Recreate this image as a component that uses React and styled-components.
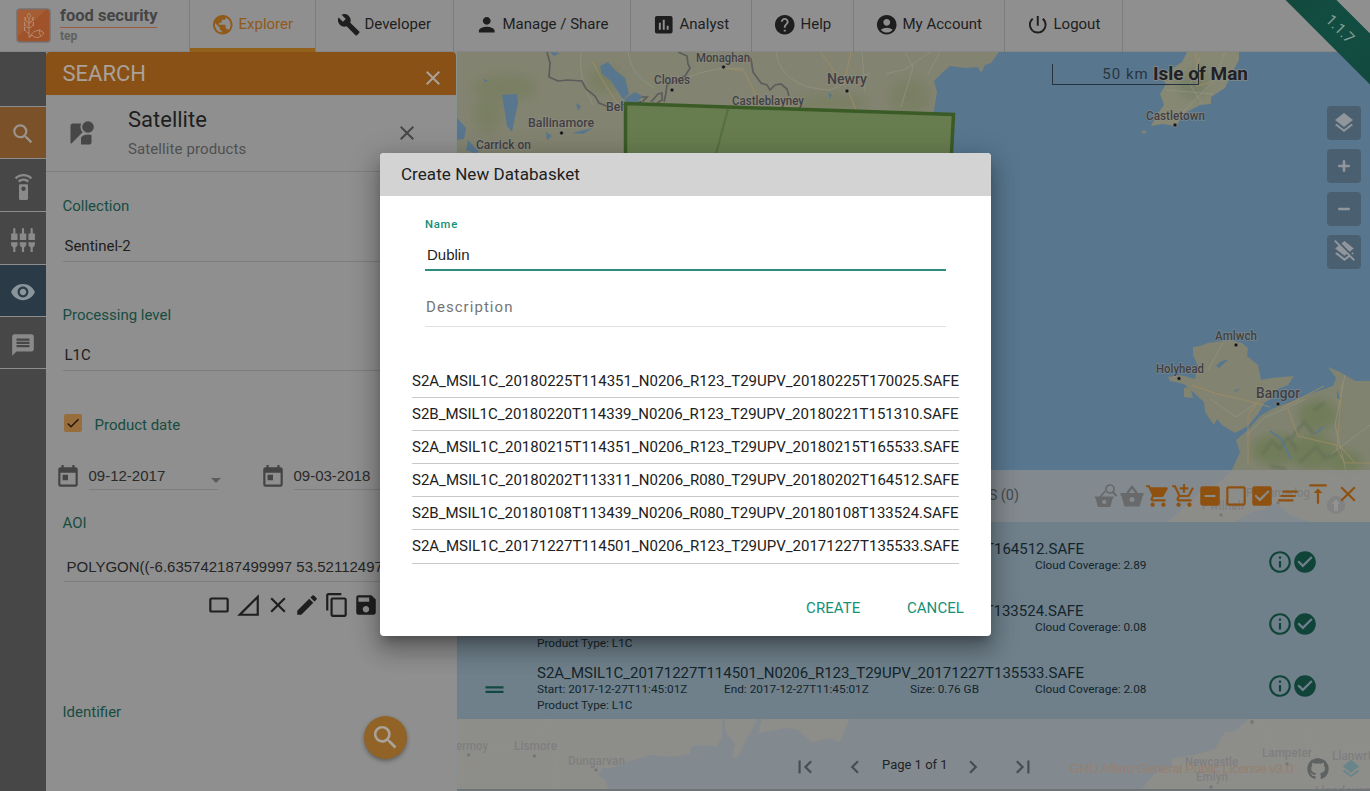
import React from 'react';
import styled, { createGlobalStyle, css } from 'styled-components';
import {
  MdPublic, MdBuild, MdPerson, MdInsertChart, MdHelp, MdAccountCircle, MdPowerSettingsNew,
  MdSearch, MdSettingsRemote, MdSettingsInputComponent, MdVisibility, MdMessage, MdStreetview,
  MdClose, MdToday, MdArrowDropDown, MdCropLandscape, MdSignalCellularNull, MdModeEdit,
  MdContentCopy, MdSave, MdLayers, MdLayersClear, MdShoppingCart,
  MdAddShoppingCart, MdIndeterminateCheckBox, MdCheckBoxOutlineBlank, MdCheckBox, MdClearAll,
  MdVerticalAlignTop, MdInfoOutline, MdCheckCircle, MdDragHandle, MdFirstPage, MdChevronLeft,
  MdChevronRight, MdLastPage, MdCheck,
} from 'react-icons/md';
import { FaGithub } from 'react-icons/fa';

const c = {
  surface: '#8f8f8f',
  ink: '#1e1e1e',
  muted: '#505050',
  green: '#174c41',
  orange: '#8f5a1a',
  line: '#7d7d7d',
  rail: '#474747',
  accent: '#149077',
};

const Global = createGlobalStyle`
  *, *::before, *::after { box-sizing: border-box; }
  body { margin: 0; overflow: hidden; }
  svg { display: block; flex: none; }
`;

const Page = styled.div`
  position: relative;
  display: grid;
  grid-template-rows: 52px 739px;
  width: 1370px;
  height: 791px;
  overflow: hidden;
  background: ${c.surface};
  color: ${c.ink};
  font: 15px/20px Roboto, "Liberation Sans", sans-serif;
`;

/* ---------- top bar ---------- */
const Header = styled.header`
  position: relative;
  display: flex;
  border-bottom: 1px solid #868686;
`;
const Brand = styled.div`
  display: flex;
  width: 189px;
  padding: 8px 0 0 16px;
  gap: 9px;
`;
const BrandText = styled.div`
  display: flex;
  flex-direction: column;
  width: 97px;
  color: #454545;
`;
const BrandName = styled.div`
  height: 20px;
  border-bottom: 1px solid #9c5a3c;
  font-size: 16.5px;
  font-weight: 700;
  line-height: 16px;
  white-space: nowrap;
`;
const BrandSub = styled.div`
  color: #606060;
  font-size: 12px;
  font-weight: 700;
  line-height: 16px;
`;
const Nav = styled.nav`
  display: flex;
  border-left: 1px solid #7c7c7c;
`;
const NavItem = styled.a`
  display: flex;
  align-items: center;
  gap: 4px;
  width: ${(p) => p.$w}px;
  height: 52px;
  padding: 0 0 4px 21px;
  border-right: 1px solid #7c7c7c;
  white-space: nowrap;
  svg { margin-top: 2px; }
  ${(p) => p.$active && css`
    color: ${c.orange};
    box-shadow: inset 0 -4px #91611b;
  `}
`;
const RibbonCorner = styled.div`
  position: absolute;
  z-index: 3;
  top: 0;
  right: 0;
  width: 90px;
  height: 90px;
  overflow: hidden;
`;
const Ribbon = styled.div`
  position: absolute;
  top: 11px;
  left: -40px;
  width: 200px;
  height: 36px;
  background: linear-gradient(90deg, #13463b, #124d41 50%, #13463b);
  color: #849d96;
  line-height: 36px;
  text-align: center;
  transform: rotate(45deg);
`;

/* ---------- left rail and search panel ---------- */
const Body = styled.div`
  display: flex;
  min-height: 0;
`;
const Rail = styled.aside`
  display: flex;
  flex-direction: column;
  width: 46px;
  padding-top: 53.5px;
  background: ${c.rail};
`;
const RailButton = styled.div`
  display: flex;
  align-items: center;
  justify-content: center;
  height: 52.7px;
  padding-top: 4px;
  border-top: 1px solid #8d8d8d;
  background: ${(p) => p.$bg || 'transparent'};
  color: ${(p) => p.$fg || '#8a8a8a'};
  &:last-child { border-bottom: 1px solid #8d8d8d; }
`;
const SearchPanel = styled.section`
  display: flex;
  flex-direction: column;
  width: 411px;
  border-right: 1px solid #8a8f91;
  background: ${c.surface};
`;
const PanelTitle = styled.div`
  display: flex;
  justify-content: space-between;
  height: 43px;
  padding: 0 11px 0 16.5px;
  border-radius: 4px 4px 0 0;
  background: #8a5116;
  color: #a9a19a;
  font-size: 22px;
  line-height: 43px;
  svg { margin-top: 14px; }
`;
const Source = styled.div`
  display: flex;
  height: 77px;
  padding: 0 37px 0 21px;
  border-bottom: 1px solid #7e7e7e;
  color: #474747;
`;
const SourceIcon = styled.div`
  width: 61px;
  padding-top: 25px;
`;
const SourceText = styled.div`
  flex: 1;
  padding-top: 12px;
`;
const SourceName = styled.div`
  color: ${c.ink};
  font-size: 22px;
  line-height: 26px;
`;
const SourceNote = styled.div`
  margin-top: 5.5px;
  color: ${c.muted};
  letter-spacing: 0.1px;
`;
const SourceClose = styled.div`
  padding-top: 26px;
`;
const Form = styled.div`
  display: flex;
  flex-direction: column;
  padding: 23.5px 0 0 16.5px;
`;
const Label = styled.label`
  height: 20px;
  color: ${c.green};
`;
const Select = styled.div`
  height: 36px;
  margin: 10px 30px 43.5px 0;
  padding: 10px 0 0 2px;
  border-bottom: 1px solid ${c.line};
`;
const CheckRow = styled.div`
  display: flex;
  align-items: center;
  gap: 13px;
  height: 20px;
  padding-left: 1.5px;
  margin: 0.5px 0 29px;
`;
const Tick = styled.span`
  display: flex;
  align-items: center;
  justify-content: center;
  width: 17.5px;
  height: 17.5px;
  margin-top: -4px;
  border-radius: 2px;
  background: #976e3b;
  color: #24140c;
`;
const Dates = styled.div`
  display: flex;
  gap: 36px;
  height: 28px;
  margin-left: -8px;
`;
const DateField = styled.div`
  display: flex;
  width: 169px;
  color: #444;
`;
const DateValue = styled.div`
  display: flex;
  flex: 1;
  justify-content: space-between;
  height: 26px;
  margin: 0 6px 0 8px;
  padding-top: 1.5px;
  border-bottom: 1px solid ${c.line};
  color: #2a2a2a;
  font-family: "Liberation Sans", sans-serif;
  svg { margin: 2px -10px 0 0; color: #5c5c5c; }
`;
const AreaLabel = styled(Label)`
  margin-top: 21px;
`;
const AreaInput = styled.div`
  height: 28px;
  margin: 20.5px 30px 10px 1.5px;
  padding: 3px 0 0 2.5px;
  border-bottom: 1px solid ${c.line};
  color: #252525;
  font-family: "Liberation Sans", sans-serif;
  white-space: nowrap;
  overflow: hidden;
`;
const AreaTools = styled.div`
  display: flex;
  gap: 3.5px;
  height: 26px;
  margin: 0 0 84px 143px;
`;
const Fab = styled.button`
  display: flex;
  align-items: center;
  justify-content: center;
  align-self: flex-end;
  width: 43px;
  height: 43px;
  margin: -6px 49px 0 0;
  padding: 0;
  border: 0;
  border-radius: 50%;
  background: #916326;
  color: #a9a39c;
  box-shadow: 0 2px 4px rgba(0, 0, 0, 0.35);
`;

/* ---------- map ---------- */
const MapArea = styled.main`
  position: relative;
  flex: 1;
  overflow: hidden;
  background: #58778f;
`;
const MapCanvas = styled.svg`
  position: absolute;
  inset: 0;
`;
const ScaleBar = styled.div`
  position: absolute;
  top: 12px;
  left: 595px;
  width: 147px;
  height: 21px;
  border: 1px solid #26333c;
  border-top: 0;
  color: #29353d;
  letter-spacing: 1px;
  text-align: center;
`;
const Controls = styled.div`
  position: absolute;
  top: 53.5px;
  right: 9px;
  display: flex;
  flex-direction: column;
  gap: 9px;
`;
const Control = styled.button`
  display: flex;
  align-items: center;
  justify-content: center;
  width: 34px;
  height: 34px;
  padding: 0;
  border: 0;
  border-radius: 4px;
  background: #4a5f70;
  color: #90969b;
`;
const Credit = styled.div`
  position: absolute;
  z-index: 2;
  right: 8px;
  bottom: 9px;
  display: flex;
  align-items: center;
  color: #96806f;
  font: 13.5px/26px "Liberation Sans", sans-serif;
  letter-spacing: -0.45px;
  white-space: nowrap;
  svg:first-of-type { margin: 0 11px 0 14px; }
`;

/* ---------- results ---------- */
const Results = styled.section`
  position: absolute;
  left: 0;
  right: 0;
  bottom: 0;
  display: flex;
  flex-direction: column;
  height: 321.5px;
`;
const ResultsBar = styled.div`
  display: flex;
  align-items: center;
  justify-content: space-between;
  height: 52.5px;
  padding: 0 8px 0 0;
  background: rgba(143, 143, 143, 0.78);
`;
const Basket = styled.div`
  width: 562px;
  padding-top: 1px;
  color: #444a4f;
  font-size: 14.5px;
  text-align: right;
`;
const BarTools = styled.div`
  display: flex;
  align-items: center;
  color: #8f5110;
`;
const BarTool = styled.span`
  display: flex;
  justify-content: center;
  width: ${(p) => p.$w || 26}px;
  margin-top: ${(p) => p.$up || 0}px;
  color: ${(p) => (p.$off ? '#68696a' : 'inherit')};
`;
const Rows = styled.div`
  display: flex;
  flex-direction: column;
  justify-content: flex-end;
  height: 196.5px;
  background: #6f808b;
`;
const Row = styled.div`
  display: flex;
  align-items: center;
  height: 62.2px;
  border-bottom: 1px solid #727e87;
  color: #14252c;
`;
const Handle = styled.div`
  width: 80px;
  padding: 5px 0 0 23.5px;
  color: #124940;
`;
const RowText = styled.div`
  flex: 1;
  padding-top: 5px;
`;
const RowName = styled.div`
  line-height: 16px;
`;
const Facts = styled.div`
  display: grid;
  grid-template-columns: 187px 186px 125px 1fr;
  font-size: 11.8px;
  line-height: 16px;
`;
const RowActions = styled.div`
  display: flex;
  width: 103px;
  margin-top: -2px;
  color: #114439;
  svg { margin-right: -1px; }
`;
const Pager = styled.div`
  display: flex;
  flex: 1;
  align-items: center;
  padding: 26px 0 0 335px;
  border-bottom: 2px solid #6f7577;
  background: rgba(143, 143, 143, 0.78);
  color: #474e52;
`;
const PageText = styled.div`
  margin: -3px 14px 0 14px;
  width: 64px;
  color: #1e2426;
  font-size: 13px;
  white-space: nowrap;
`;
const Gap = styled.span`
  width: 24px;
`;

/* ---------- dialog ---------- */
const Overlay = styled.div`
  position: absolute;
  inset: 0;
  z-index: 4;
  display: flex;
  align-items: flex-start;
  justify-content: center;
  padding-top: 153px;
`;
const Dialog = styled.div`
  display: flex;
  flex-direction: column;
  width: 611px;
  height: 482.5px;
  margin-left: 1px;
  border-radius: 4px;
  overflow: hidden;
  background: #fff;
  box-shadow: 0 7px 9px -4px rgba(0, 0, 0, 0.25), 0 14px 22px 2px rgba(0, 0, 0, 0.2),
    0 6px 28px 5px rgba(0, 0, 0, 0.16);
`;
const DialogTitle = styled.h2`
  margin: 0;
  height: 43px;
  padding-left: 21px;
  background: #d3d3d3;
  color: #212121;
  font-size: 17px;
  font-weight: 400;
  letter-spacing: 0.06px;
  line-height: 42px;
`;
const Fields = styled.div`
  display: flex;
  flex-direction: column;
  padding: 21px 45px 0;
`;
const FieldLabel = styled.label`
  color: ${c.accent};
  font-size: 11.3px;
  font-weight: 500;
  letter-spacing: 0.75px;
  line-height: 16px;
`;
const FieldInput = styled.div`
  height: 38px;
  padding: 12px 0 0 2px;
  border-bottom: 2px solid #2f8d80;
  font-family: "Liberation Sans", sans-serif;
`;
const FieldPlaceholder = styled.div`
  height: 55.5px;
  padding: 26px 0 0 1px;
  border-bottom: 1px solid #e0e0e0;
  color: #757575;
  letter-spacing: 1.05px;
`;
const Products = styled.ul`
  display: flex;
  flex-direction: column;
  width: 547px;
  margin: 38px 0 0 32px;
  padding: 0;
  list-style: none;
`;
const Product = styled.li`
  height: 33.2px;
  border-bottom: 1px solid #c9c9c9;
  color: #212121;
  line-height: 33px;
  white-space: nowrap;
`;
const Actions = styled.div`
  display: flex;
  justify-content: flex-end;
  gap: 46.5px;
  padding: 34px 27px 0 0;
  color: ${c.accent};
  letter-spacing: 0.08px;
`;

const nav = [
  ['Explorer', MdPublic, 126],
  ['Developer', MdBuild, 138],
  ['Manage / Share', MdPerson, 177],
  ['Analyst', MdInsertChart, 121],
  ['Help', MdHelp, 102],
  ['My Account', MdAccountCircle, 151],
  ['Logout', MdPowerSettingsNew, 118],
];

const products = [
  'S2A_MSIL1C_20180225T114351_N0206_R123_T29UPV_20180225T170025.SAFE',
  'S2B_MSIL1C_20180220T114339_N0206_R123_T29UPV_20180221T151310.SAFE',
  'S2A_MSIL1C_20180215T114351_N0206_R123_T29UPV_20180215T165533.SAFE',
  'S2A_MSIL1C_20180202T113311_N0206_R080_T29UPV_20180202T164512.SAFE',
  'S2B_MSIL1C_20180108T113439_N0206_R080_T29UPV_20180108T133524.SAFE',
  'S2A_MSIL1C_20171227T114501_N0206_R123_T29UPV_20171227T135533.SAFE',
];

const results = [
  { name: products[3], time: '2018-02-02T11:33:11Z', size: '0.76 GB', cloud: '2.89' },
  { name: products[4], time: '2018-01-08T11:34:39Z', size: '0.76 GB', cloud: '0.08' },
  { name: products[5], time: '2017-12-27T11:45:01Z', size: '0.76 GB', cloud: '2.08' },
];

/* [text, x, y, size, width, dot x, dot y] */
const places = [
  ['Monaghan', 696, 62, 12, 54, 723.5, 67],
  ['Clones', 654, 84, 12, 36, 672, 90],
  ['Newry', 827, 84, 14, 40, 847, 91],
  ['Castleblayney', 732, 105, 12, 72],
  ['Belturbet', 606, 111, 12, 50],
  ['Ballinamore', 528, 127, 12, 66, 561.5, 133],
  ['Carrick on', 476, 149, 12, 55],
  ['Castletown', 1146, 120, 12, 59, 1175, 125],
  ['Amlwch', 1215, 340, 12, 42, 1236, 345],
  ['Holyhead', 1156, 373, 12, 48, 1179, 378.5],
  ['Bangor', 1256, 398, 15, 44, 1278, 404],
  ['Porthmadog', 1246, 497, 12, 64, 1278, 503],
  ['Pwllheli', 1202, 510, 12, 42, 1221, 515],
  ['Fermoy', 450, 750, 12, 38, 468.5, 755],
  ['Lismore', 514, 750, 12, 43, 534.5, 756],
  ['Dungarvan', 568, 765, 12, 57, 596, 770],
  ['Newcastle', 1185, 766, 12, 53],
  ['Emlyn', 1196, 781, 12, 32, 1211, 787],
  ['Lampeter', 1262, 757, 12, 50, 1287, 764],
  ['Llanwrtyd', 1332, 760, 12, 52],
  ['Llandovery', 1315, 795, 12, 60],
];

function Logo() {
  return (
    <svg width="35" height="35" viewBox="0 0 35 35" fill="none">
      <rect x="1" y="1" width="33" height="33" rx="3" fill="#a0522a" stroke="#777170" strokeWidth="1.5" />
      <path d="M2 28L30 2H3a1 1 0 0 0-1 1z" fill="#ac683d" opacity=".5" />
      <g stroke="#b58e74" strokeWidth=".9">
        <path d="M13 5c-2 2-2 4 0 6c2-2 2-4 0-6zM13 11v18M9 9c0 3 1 5 4 6M17 9c0 3-1 5-4 6M9 9v4M17 9v4M8.500 14c0 3 1 5 4.500 6M17.500 14c0 3-1 5-4.500 6M8.500 14v4M17.500 14v4M8.500 19c0 3 1 5 4.500 6M8.500 19v4" />
        <path d="M14 29c2-6 9-9 14-4c-3 5-9 6-12 2l-3 3M25 23.500h.6M24 21c-1 2-1 5 1 7" />
      </g>
    </svg>
  );
}

function BasketSearch() {
  return (
    <svg width="26" height="26" viewBox="0 0 26 26" fill="none">
      <path fill="currentColor" fillRule="evenodd" d="M2 13.500h4.500l5-6 1.300 1.100-4 4.900h11.700v2h-1l-1.800 7.500q-.3 1-1.300 1H5.800q-1 0-1.300-1L2.700 15.500H2zM11.200 16.800a2.100 2.100 0 1 0 0 4.200a2.100 2.100 0 0 0 0-4.200z" />
      <circle cx="17" cy="6" r="4" stroke="currentColor" strokeWidth="1.700" />
      <path d="M19.600 8.800l4 4.200" stroke="currentColor" strokeWidth="2.200" />
    </svg>
  );
}

function BasketIcon() {
  return (
    <svg width="26" height="26" viewBox="0 0 26 26">
      <path fill="currentColor" fillRule="evenodd" d="M12.100 3.100q1-.9 1.900 0L19 10h5.500v2.400h-.8l-2.600 9.800q-.4 1.300-1.700 1.300H6.700q-1.300 0-1.700-1.300L2.400 12.400H1.500V10h5.600zM13 5.700L9.800 10h6.400zM13 14a2.500 2.500 0 1 0 0 5a2.500 2.500 0 0 0 0-5z" />
    </svg>
  );
}

function Terrain() {
  return (
    <MapCanvas width="913" height="739" viewBox="457 52 913 739">
      <defs>
        <filter id="soft" x="-30%" y="-30%" width="160%" height="160%">
          <feGaussianBlur stdDeviation="5" />
        </filter>
        <filter id="haze" x="-30%" y="-30%" width="160%" height="160%">
          <feGaussianBlur stdDeviation="1.2" />
        </filter>
        <clipPath id="wales">
          <path d="M1236 440L1240 452L1232 470L1220 482L1200 492L1168 522H1235L1252 512L1262 510L1275 503L1290 515L1310 522H1370V381H1355L1340 372L1328 367L1336 378L1333 386L1310 394L1290 402L1272 409L1260 416L1248 430Z" />
        </clipPath>
      </defs>
      <g fill="#838371">
        <path d="M457 52H999L991 63L985 65L981 73L978 67L965 68L950 66L943 72L934 81L937 92L934 110L920 160H457Z" />
        <path d="M457 700H723L722 736L717 747L704 745L692 746L690 754L672 757L650 755L630 761L612 768L603 768L598 775L606 780L608 791H457Z" />
        <path d="M722 700H758L756 722L746 740L738 757L732 757L735 744L726 732Z" />
        <path d="M768 700H850L848 722L840 742L828 738L812 743L798 730L786 728L758 733Z" />
        <path d="M1258 700L1249 719L1235 731L1225 732L1215 749L1190 756L1172 759L1172 766L1155 773L1140 791H1370V700Z" />
        <path d="M1193 347L1200 346L1208 343L1230 340L1242 343L1248 348L1247 356L1258 365L1261 380L1272 378L1294 376L1288 385L1278 389L1272 398L1264 403L1258 414L1248 426L1235 433L1222 425L1217 419L1214 425L1205 412L1204 402L1192 391L1184 384L1170 381L1168 377L1180 375L1195 379L1198 366L1193 355Z" />
        <path d="M1184 388L1190 387L1193 398L1184 397Z" />
      </g>
      <g clipPath="url(#wales)">
        <rect x="1160" y="360" width="210" height="165" fill="#818371" />
        <g fill="#717d5a" filter="url(#soft)">
          <ellipse cx="1318" cy="415" rx="20" ry="16" />
          <ellipse cx="1275" cy="450" rx="24" ry="16" />
          <ellipse cx="1312" cy="452" rx="25" ry="18" />
          <ellipse cx="1345" cy="462" rx="18" ry="12" />
        </g>
        <g stroke="#606d56" strokeWidth="3" fill="none" opacity=".55" filter="url(#haze)">
          <path d="M1262 455l10-14 8 8 8-12 9 14M1290 440l14-18 10 12M1300 462l16-15 9 11 16-7M1270 466l16 3M1314 410l10-7" />
        </g>
        <path d="M1315 434l8-7M1270 431l11 8 10 20" stroke="#5c788a" strokeWidth="2" fill="none" />
      </g>
      <path d="M1187 52L1182 62L1170 70L1162 78L1166 84L1160 94L1164 105L1156 116L1151 126L1162 124L1176 126L1185 113L1200 105L1211 104L1211 97L1225 88L1232 73L1239 60V52Z" fill="#868873" />
      <ellipse cx="1144" cy="132" rx="2.500" ry="1.500" fill="#838371" />
      <path d="M1176 82l20-15 15 5-9 25-16 2z" fill="#777f67" filter="url(#soft)" />
      <g fill="#747e5b" filter="url(#soft)" opacity=".6">
        <ellipse cx="505" cy="88" rx="32" ry="14" />
        <ellipse cx="488" cy="115" rx="15" ry="18" />
        <ellipse cx="830" cy="103" rx="38" ry="9" />
        <ellipse cx="910" cy="97" rx="20" ry="18" />
        <ellipse cx="605" cy="80" rx="17" ry="14" />
      </g>
      <g stroke="#9b9b8b" strokeWidth="1" fill="none" opacity=".5">
        <path d="M581 52q-3 28 12 53M628 52q2 22 26 36M684 79q30-14 60-10M776 52q6 36 54 38l40-17M862 52l3 40M930 52l-24 17-20 5M940 52l-12 22M905 52l8 15-12 40" />
        <path d="M1200 57l-10 28 12 18M1225 52l-12 30-38 38M1167 90l46 4M1247 435l18-18 20-8 20-10M1345 375l-10 50 12 50M1330 455l40-30M1208 370l15-27M1210 399l26 18 20-14" />
        <path d="M459 765l22-29M457 740l30 12 40-7 25-27M560 740l-4 20 3 31M1262 720l20 45 88-18M1300 725l20 30 10 36" />
      </g>
      <g stroke="#a28d61" strokeWidth="1.100" fill="none" opacity=".7">
        <path d="M592 61q14 27 29 47M722 68l22 3 16 32M820 52l24 32 7-32M848 90l8 20" />
        <path d="M1192 385q24 10 45 13l33 9M1282 408l42-22M1248 465v-50l15-20M1288 409l10 27 42 10 15 17M1342 383l-5 66 8 14h25M1196 52l1 34 14-4" />
        <path d="M457 782l11-23 11 12" />
      </g>
      <g stroke="#5c5c5c" strokeWidth="1.700" fill="none">
        <path d="M547 52l3 11-1 14 9 4 9-1 15 1 4 8 9 7 4 7 10 4" />
        <path d="M678 52l9 4 1 8 2 4-5 8-18 9-1 8-2 9M629 101l9-4h9l-5 5M651 102l7-8 4-1v7l-5 3" />
        <path d="M745 54l6 5 2 13 8 11 6 2 3 5 5-5 6-1 6 5 2 7" />
      </g>
      <g fill="#58778f">
        <path d="M600 66l8-4 7 8 10 8 4 16-6 5-12-18-9-7zM502 95l15-1 1 9-6 29-5-6zM457 118l9 10-2 11-7 1zM468 140l11 12-5 1-8-3zM550 52l10 1-6 3zM576 103l5 3-3 5zM572 133l8-2 13-3-10 6zM546 132l6 4-5 4zM483 79l6 2-4 1zM624 99l11-7 7 4-5 8-9 1zM828 92l4 3-2 4z" />
        <path d="M1216 366q5-7 12-6-5 4-9 8zM1234 391l6-3-4 4zM1337 388l3 11-3-1z" />
      </g>
      {places.map(([text, x, y, size, width, dx, dy]) => (
        <g key={text}>
          <text x={x} y={y} fontSize={size} textLength={width} lengthAdjust="spacingAndGlyphs" fontFamily="Roboto, sans-serif" fontWeight="500" fill="#413f43" stroke="#92928a" strokeWidth="1.500" strokeOpacity=".6" paintOrder="stroke">
            {text}
          </text>
          {dx && <circle cx={dx} cy={dy} r="2" fill="#161616" stroke="#92928a" strokeWidth=".6" />}
        </g>
      ))}
      <path d="M625.500 103.500L953.500 114.500L944 300H625.500Z" fill="#677d4f" stroke="#3b5b26" strokeWidth="3.500" />
      <path d="M728 109l-12 45" stroke="#55703f" strokeWidth="2" fill="none" />
      <text x="1153" y="80" fontSize="18.500" textLength="95" lengthAdjust="spacingAndGlyphs" fontFamily="Roboto, sans-serif" fontWeight="700" fill="#1f2125" stroke="#8d8d85" strokeWidth="2" strokeOpacity=".7" paintOrder="stroke">
        Isle of Man
      </text>
      <circle cx="1336" cy="505" r="9" fill="#4d554d" />
      <path d="M1336 499l4 5h-2v7h-4v-7h-2z" fill="#999" />
      <circle cx="1252" cy="722" r="2" fill="#222" />
    </MapCanvas>
  );
}

function ResultRow({ item }) {
  return (
    <Row>
      <Handle><MdDragHandle size={27} /></Handle>
      <RowText>
        <RowName>{item.name}</RowName>
        <Facts>
          <span>Start: {item.time}</span>
          <span>End: {item.time}</span>
          <span>Size: {item.size}</span>
          <span>Cloud Coverage: {item.cloud}</span>
          <span>Product Type: L1C</span>
        </Facts>
      </RowText>
      <RowActions>
        <MdInfoOutline size={26} />
        <MdCheckCircle size={26} />
      </RowActions>
    </Row>
  );
}

export default function App() {
  return (
    <Page>
      <Global />
      <Header>
        <Brand>
          <Logo />
          <BrandText>
            <BrandName>food security</BrandName>
            <BrandSub>tep</BrandSub>
          </BrandText>
        </Brand>
        <Nav>
          {nav.map(([label, Icon, w], i) => (
            <NavItem key={label} $w={w} $active={i === 0}>
              <Icon size={23.5} />
              {label}
            </NavItem>
          ))}
        </Nav>
        <RibbonCorner><Ribbon>1.1.7</Ribbon></RibbonCorner>
      </Header>

      <Body>
        <Rail>
          <RailButton $bg="#7a5128" $fg="#9b958f"><MdSearch size={26} /></RailButton>
          <RailButton><MdSettingsRemote size={27} /></RailButton>
          <RailButton><MdSettingsInputComponent size={26} /></RailButton>
          <RailButton $bg="#2a3b47" $fg="#8a949b"><MdVisibility size={26} /></RailButton>
          <RailButton><MdMessage size={26} /></RailButton>
        </Rail>

        <SearchPanel>
          <PanelTitle>SEARCH<MdClose size={24} /></PanelTitle>
          <Source>
            <SourceIcon><MdStreetview size={28} /></SourceIcon>
            <SourceText>
              <SourceName>Satellite</SourceName>
              <SourceNote>Satellite products</SourceNote>
            </SourceText>
            <SourceClose><MdClose size={24} /></SourceClose>
          </Source>
          <Form>
            <Label>Collection</Label>
            <Select>Sentinel-2</Select>
            <Label>Processing level</Label>
            <Select>L1C</Select>
            <CheckRow>
              <Tick><MdCheck size={16} /></Tick>
              <Label>Product date</Label>
            </CheckRow>
            <Dates>
              {['09-12-2017', '09-03-2018'].map((d) => (
                <DateField key={d}>
                  <MdToday size={26} />
                  <DateValue>{d}<MdArrowDropDown size={24} /></DateValue>
                </DateField>
              ))}
            </Dates>
            <AreaLabel>AOI</AreaLabel>
            <AreaInput>POLYGON((-6.635742187499997 53.52112497</AreaInput>
            <AreaTools>
              <MdCropLandscape size={26} />
              <MdSignalCellularNull size={26} />
              <MdClose size={26} />
              <MdModeEdit size={26} />
              <MdContentCopy size={26} />
              <MdSave size={26} />
            </AreaTools>
            <Label>Identifier</Label>
            <Fab><MdSearch size={31} /></Fab>
          </Form>
        </SearchPanel>

        <MapArea>
          <Terrain />
          <ScaleBar>50 km</ScaleBar>
          <Controls>
            <Control><MdLayers size={24} /></Control>
            <Control>
              <svg width="12" height="12" viewBox="0 0 12 12"><path d="M6 1.300v9.400M1.300 6h9.400" stroke="currentColor" strokeWidth="2.600" strokeLinecap="round" /></svg>
            </Control>
            <Control>
              <svg width="12" height="12" viewBox="0 0 12 12"><path d="M1.300 6h9.400" stroke="currentColor" strokeWidth="2.600" strokeLinecap="round" /></svg>
            </Control>
            <Control><MdLayersClear size={25} /></Control>
          </Controls>
          <Results>
            <ResultsBar>
              <Basket>DATABASKETS (0)</Basket>
              <BarTools>
                <BarTool $off><BasketSearch /></BarTool>
                <BarTool $off><BasketIcon /></BarTool>
                <BarTool><MdShoppingCart size={26} /></BarTool>
                <BarTool><MdAddShoppingCart size={26} /></BarTool>
                <BarTool><MdIndeterminateCheckBox size={26} /></BarTool>
                <BarTool><MdCheckBoxOutlineBlank size={26} /></BarTool>
                <BarTool><MdCheckBox size={26} /></BarTool>
                <BarTool><MdClearAll size={26} /></BarTool>
                <BarTool $w={33} $up={-4}><MdVerticalAlignTop size={26} /></BarTool>
                <BarTool $w={28} $up={-4}><MdClose size={26} /></BarTool>
              </BarTools>
            </ResultsBar>
            <Rows>
              {results.map((r) => <ResultRow key={r.name} item={r} />)}
            </Rows>
            <Pager>
              <MdFirstPage size={26} />
              <Gap />
              <MdChevronLeft size={26} />
              <PageText>Page 1 of 1</PageText>
              <MdChevronRight size={26} />
              <Gap />
              <MdLastPage size={26} />
            </Pager>
          </Results>
          <Credit>
            GNU Affero General Public License v3.0
            <FaGithub size={22} color="#5f6262" />
            <MdLayers size={22} color="#6a8589" />
          </Credit>
        </MapArea>
      </Body>

      <Overlay>
        <Dialog>
          <DialogTitle>Create New Databasket</DialogTitle>
          <Fields>
            <FieldLabel>Name</FieldLabel>
            <FieldInput>Dublin</FieldInput>
            <FieldPlaceholder>Description</FieldPlaceholder>
          </Fields>
          <Products>
            {products.map((p) => <Product key={p}>{p}</Product>)}
          </Products>
          <Actions>
            <span>CREATE</span>
            <span>CANCEL</span>
          </Actions>
        </Dialog>
      </Overlay>
    </Page>
  );
}
